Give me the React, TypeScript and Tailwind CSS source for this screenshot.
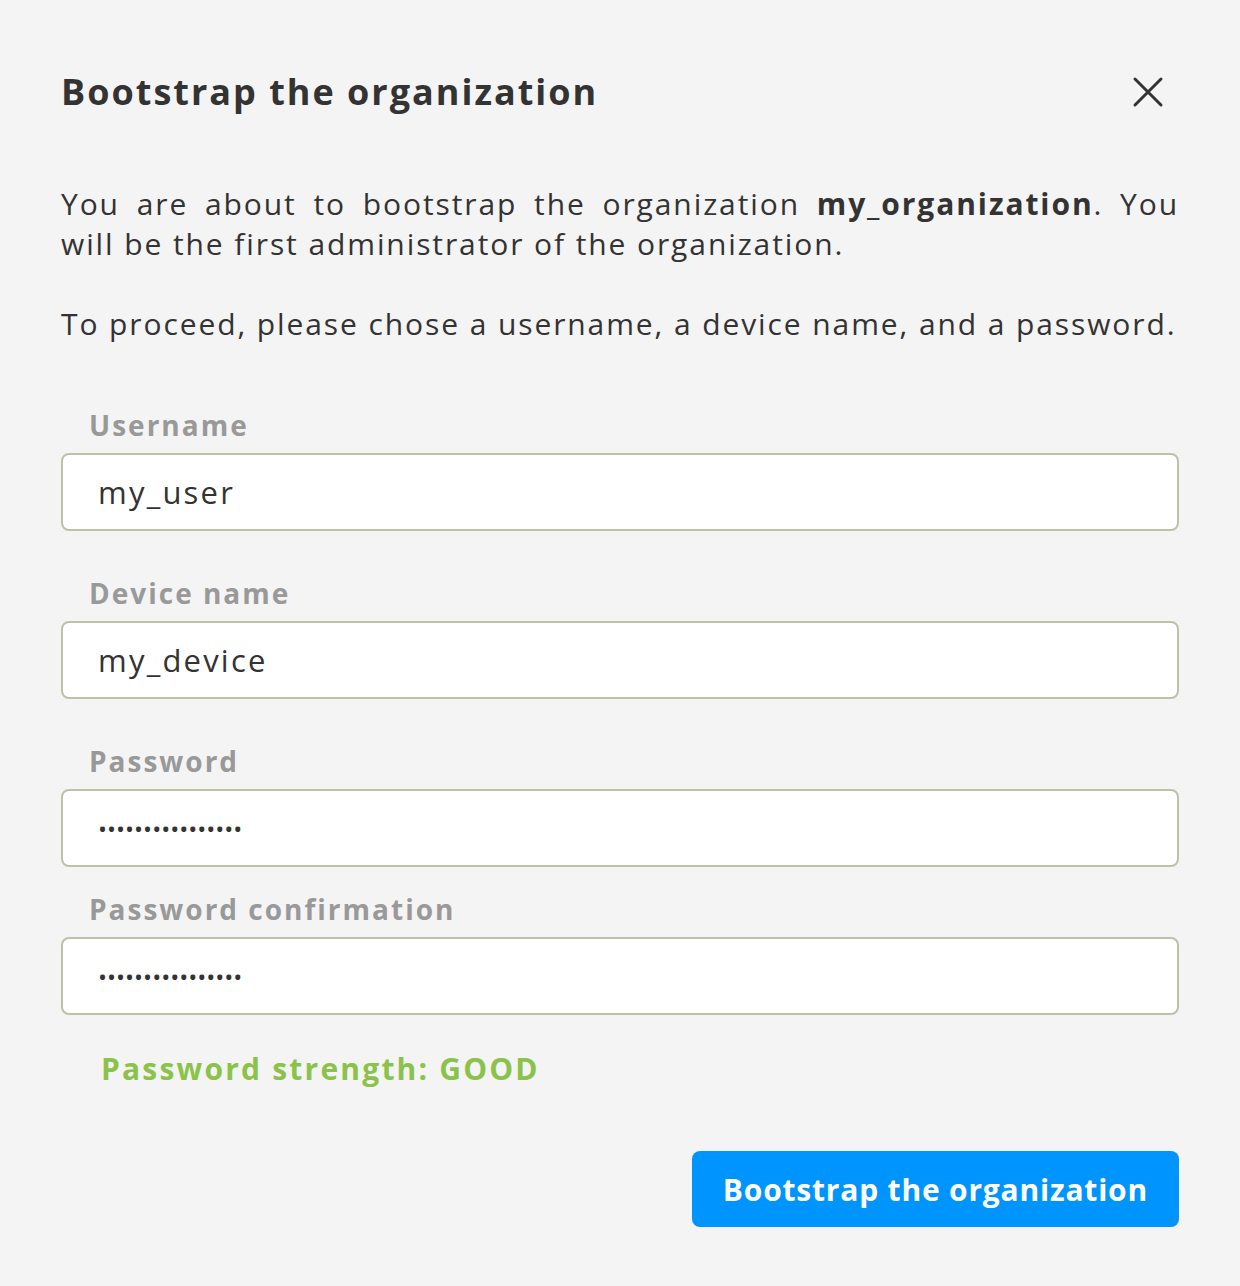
import React from 'react';

const fields = [
  { label: 'Username', value: 'my_user', type: 'text' },
  { label: 'Device name', value: 'my_device', type: 'text' },
  { label: 'Password', value: 'my_password_1234', type: 'password' },
  { label: 'Password confirmation', value: 'my_password_1234', type: 'password' },
];

function CloseIcon() {
  return (
    <svg width="32" height="32" viewBox="0 0 32 32" fill="none" stroke="#333333" strokeWidth="3" strokeLinecap="round">
      <path d="M3 3 L29 29 M29 3 L3 29" />
    </svg>
  );
}

export default function App() {
  return (
    <div className="min-h-[1286px] w-full bg-[#f4f4f4] text-[#333333] font-['Open_Sans',sans-serif]">
      <div className="px-[61px] pt-[66px] pb-[58px] flex flex-col">
        {/* Header */}
        <div className="flex items-center justify-between">
          <h1 className="text-[36px] font-bold leading-[52px] tracking-[2px]">Bootstrap the organization</h1>
          <button className="mr-[15px] w-[32px] h-[32px] flex items-center justify-center">
            <CloseIcon />
          </button>
        </div>

        {/* Intro */}
        <div className="mt-[66px] text-[30px] leading-[40px] tracking-[1.9px] text-justify">
          <p>
            You are about to bootstrap the organization <span className="font-bold">my_organization</span>. You will be
            the first administrator of the organization.
          </p>
          <p className="mt-[40px]">To proceed, please chose a username, a device name, and a password.</p>
        </div>

        {/* Form */}
        <div className="mt-[62px] flex flex-col">
          {fields.map((f, i) => (
            <div key={i} className={i === 0 ? 'flex flex-col' : i === 3 ? 'flex flex-col mt-[23px]' : 'flex flex-col mt-[43px]'}>
              <label className="pl-[28px] text-[28px] font-bold leading-[38px] tracking-[2px] text-[#999999]">{f.label}</label>
              <input
                type={f.type}
                defaultValue={f.value}
                className={
                  f.type === 'password'
                    ? 'mt-[9px] h-[78px] w-full rounded-[8px] border-2 border-[#bfbfae] bg-white px-[35px] text-[24px] text-[#333333] outline-none'
                    : 'mt-[9px] h-[78px] w-full rounded-[8px] border-2 border-[#bfbfae] bg-white px-[35px] text-[31px] tracking-[2.2px] text-[#333333] outline-none'
                }
              />
            </div>
          ))}
          <p className="mt-[34px] pl-[40px] text-[30px] font-bold leading-[40px] tracking-[2.2px] text-[#8bc34a]">
            Password strength: GOOD
          </p>
        </div>

        {/* Footer */}
        <div className="mt-[62px] flex justify-end">
          <button className="h-[76px] px-[31px] rounded-[8px] bg-[#0094ff] text-white text-[30px] font-bold tracking-[0.8px]">
            Bootstrap the organization
          </button>
        </div>
      </div>
    </div>
  );
}
